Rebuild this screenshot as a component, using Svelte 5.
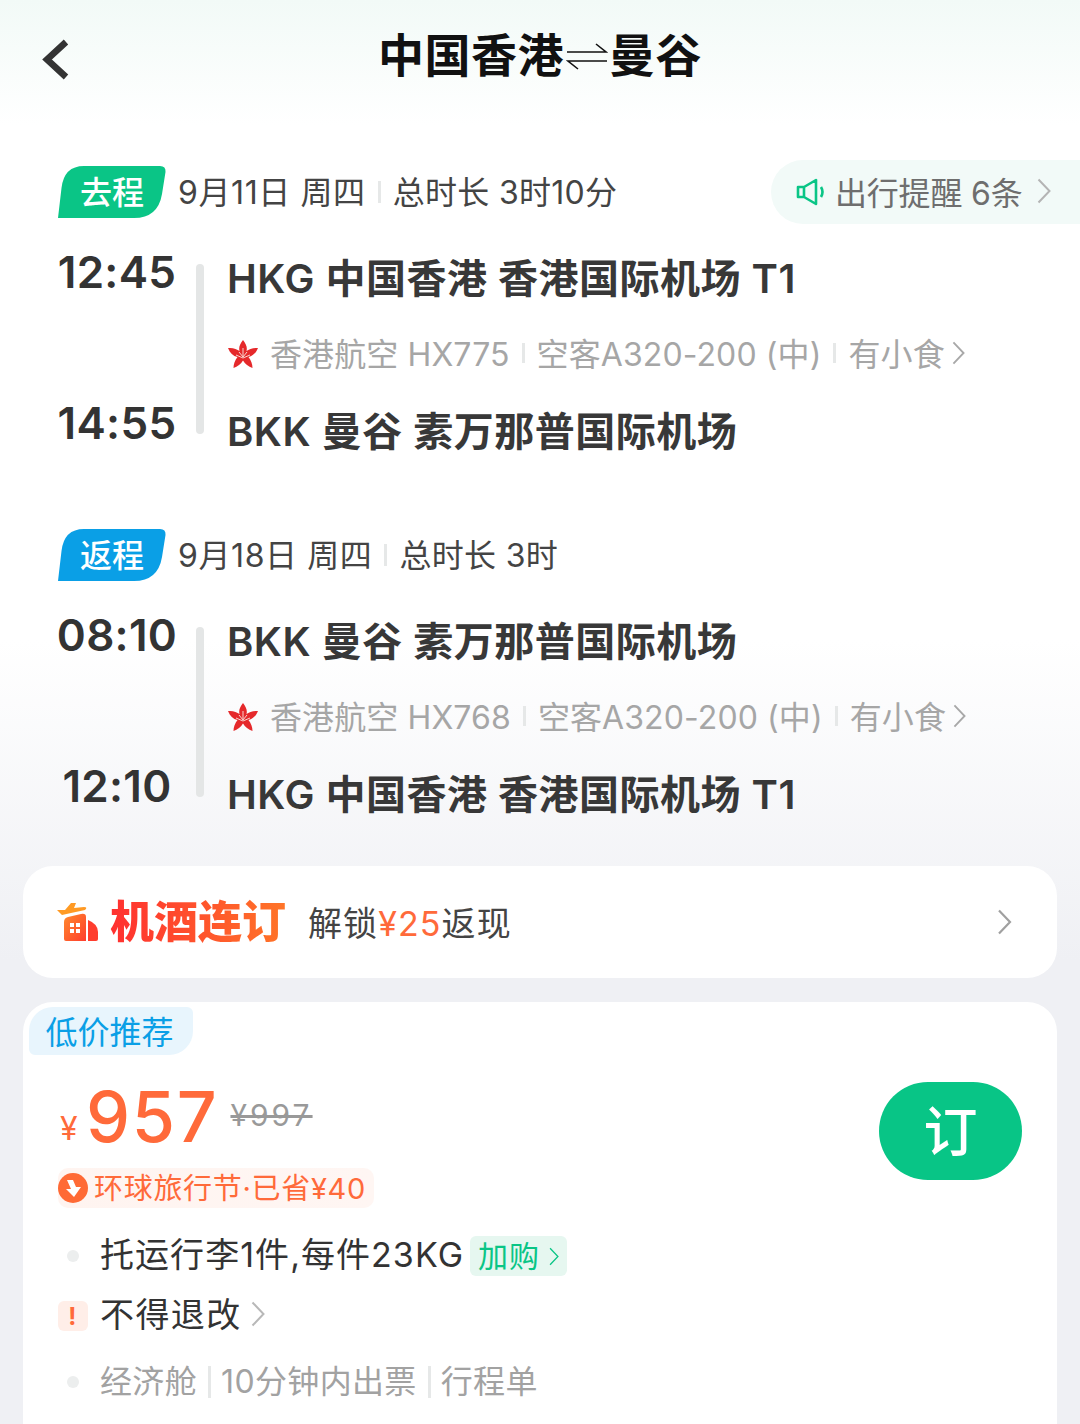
<script>
  const legs = [
    {
      tag: '去程', color: '#0ac586', date: '9月11日 周四', total: '总时长 3时10分', notice: true,
      dep: '12:45', arr: '14:55',
      from: 'HKG 中国香港 香港国际机场 T1', to: 'BKK 曼谷 素万那普国际机场',
      flight: '香港航空 HX775'
    },
    {
      tag: '返程', color: '#0a9fe6', date: '9月18日 周四', total: '总时长 3时', notice: false,
      dep: '08:10', arr: '12:10',
      from: 'BKK 曼谷 素万那普国际机场', to: 'HKG 中国香港 香港国际机场 T1',
      flight: '香港航空 HX768'
    }
  ]
</script>

{#snippet chevron(w, h, color, sw)}
  <svg class="chev" width={w} height={h} viewBox="0 0 14 26" fill="none" stroke={color} stroke-width={sw}>
    <path d="M1.5 1.5 12.5 13 1.5 24.5" />
  </svg>
{/snippet}

{#snippet bauhinia()}
  <svg class="flower" width="30" height="28" viewBox="0 0 30 28">
    <path fill="#e5292b" d="M15 0C18 4 19.500 7 18.500 11 21 9 25 7.500 30 8 28 13 25 16 20.500 17 23 20 24.500 24 24.500 28 20.500 26.500 17 24 15 20.500 13 24 9.500 26.500 5.500 28 5.500 24 7 20 9.500 17 5 16 2 13 0 8 5 7.500 9 9 11.500 11 10.500 7 12 4 15 0Z" />
    <path fill="none" stroke="#f8d3ce" stroke-width="1" d="M15 8v9M11 12l4 5 4-5M8 15l7 3 7-3" />
  </svg>
{/snippet}

<div class="page">
  <header class="nav">
    <svg class="back" width="27" height="41" viewBox="0 0 27 41" fill="none" stroke="#333" stroke-width="6.500">
      <path d="M24 3 5 20.500 24 38" />
    </svg>
    <h1>
      中国香港<svg class="swap" width="42" height="30" viewBox="0 0 42 30" fill="none" stroke="#111" stroke-width="1.600">
        <path d="M1 11H40L30 3M41 20H2L12 28" />
      </svg>曼谷
    </h1>
  </header>

  <section class="legs">
    {#each legs as leg}
      <div class="leg">
        <div class="leg-head">
          <span class="tag">
            <svg width="108" height="52" viewBox="0 0 108 52">
              <path fill={leg.color} d="M0 52 3.500 22Q6 0 26 0H102Q108 0 107.500 6L104 28Q100 52 76 52Z" />
            </svg>
            <b>{leg.tag}</b>
          </span>
          <span class="date">{leg.date}</span>
          <i class="sep"></i>
          <span class="date total">{leg.total}</span>
          {#if leg.notice}
            <div class="notice">
              <svg width="30" height="30" viewBox="0 0 30 30" fill="none" stroke="#0ac586" stroke-width="2.600">
                <path d="M2 10h6v10H2zM8 10 20 3v24L8 20zM25 10q3 5 0 10" stroke-linejoin="round" />
              </svg>
              <span class="notice-text">出行提醒 6条</span>
              {@render chevron(14, 26, '#b4b4b4', 2)}
            </div>
          {/if}
        </div>
        <div class="leg-body">
          <div class="times">
            <span>{leg.dep}</span>
            <span>{leg.arr}</span>
          </div>
          <i class="rail"></i>
          <div class="info">
            <div class="route">{leg.from}</div>
            <div class="meta">
              {@render bauhinia()}
              <span>{leg.flight}</span>
              <i class="sep small"></i>
              <span>空客A320-200 (中)</span>
              <i class="sep small"></i>
              <span>有小食</span>
              {@render chevron(13, 24, '#a8a8a8', 2)}
            </div>
            <div class="route last">{leg.to}</div>
          </div>
        </div>
      </div>
    {/each}
  </section>

  <section class="bundle">
    <svg width="41" height="39" viewBox="0 0 41 39">
      <defs>
        <linearGradient id="bundleFill" x1="0" y1="0" x2="1" y2="1">
          <stop offset="0" stop-color="#ff8a2c" />
          <stop offset="1" stop-color="#ff3d2e" />
        </linearGradient>
      </defs>
      <path fill="#ff9a24" d="M0 7 8 7 14 0H19L17 5 27 4Q31 4 28 7L14 10 5 12Z" />
      <path fill="url(#bundleFill)" fill-rule="evenodd" d="M7 19Q7 15 11 14L24 11Q29 10 29 14V38H9Q7 38 7 36ZM13 20h4v4h-4ZM19 20h4v4h-4ZM13 26h4v4h-4ZM19 26h4v4h-4Z" />
      <path fill="#ff3d2e" d="M31 17Q41 21 41 29V36Q41 38 39 38H31Z" />
    </svg>
    <span class="bundle-name">机酒连订</span>
    <span class="bundle-text">解锁<em>¥25</em>返现</span>
    {@render chevron(15, 26, '#a0a0a0', 2.200)}
  </section>

  <section class="offer">
    <div class="offer-tag"><span>低价推荐</span></div>
    <div class="offer-main">
      <div class="offer-left">
        <div class="price">
          <span class="yen">¥</span>
          <span class="amount">957</span>
          <s>¥997</s>
        </div>
        <div class="promo">
          <svg width="30" height="30" viewBox="0 0 30 30">
            <circle cx="15" cy="15" r="15" fill="#ff6a35" />
            <path fill="#fff" d="M9 7h6l3 7h5l-7 10-8-8h5z" />
          </svg>
          <span>环球旅行节·已省¥40</span>
        </div>
      </div>
      <button class="book"><span>订</span></button>
    </div>
    <ul class="perks">
      <li class="baggage">
        <i class="dot"></i>
        <span class="perk-text">托运行李1件,每件23KG</span>
        <span class="addon"><span>加购</span>{@render chevron(10, 19, '#0ac586', 1.800)}</span>
      </li>
      <li class="refund">
        <i class="warn">!</i>
        <span class="perk-text">不得退改</span>
        {@render chevron(14, 26, '#b8b8b8', 2)}
      </li>
      <li class="extras">
        <i class="dot"></i>
        <span class="perk-text">经济舱</span>
        <i class="sep tall"></i>
        <span class="perk-text">10分钟内出票</span>
        <i class="sep tall"></i>
        <span class="perk-text">行程单</span>
      </li>
    </ul>
  </section>
</div>

<style>
  :global(body) {
    margin: 0;
  }

  .page {
    height: 1424px;
    overflow: hidden;
    box-sizing: border-box;
    font-family: Inter, 'Noto Sans CJK SC', sans-serif;
    color: #333;
    background: linear-gradient(180deg, #f2faf7 0, #fff 125px, #fff 640px, #eff0f4 960px, #eff0f4 100%);
  }

  i {
    font-style: normal;
  }

  svg {
    display: block;
    flex-shrink: 0;
  }

  .nav {
    position: relative;
    height: 110px;
    display: flex;
    align-items: center;
    justify-content: center;
  }

  .back {
    position: absolute;
    left: 42px;
    top: 39px;
  }

  h1 {
    margin: 0;
    display: flex;
    align-items: center;
    font-size: 46px;
    font-weight: 700;
    line-height: 56px;
    letter-spacing: 0.5px;
    color: #111;
  }

  .swap {
    margin: 2px 1px 0 2px;
  }

  .legs {
    margin-top: 50px;
    padding-bottom: 23px;
    display: flex;
    flex-direction: column;
    gap: 43px;
  }

  .leg {
    height: 320px;
  }

  .leg-head {
    height: 64px;
    padding-left: 58px;
    display: flex;
    align-items: center;
  }

  .tag {
    position: relative;
    width: 108px;
    height: 52px;
    margin-right: 12px;
    display: flex;
    align-items: center;
    justify-content: center;
  }

  .tag svg {
    position: absolute;
    inset: 0;
  }

  .tag b {
    position: relative;
    padding-bottom: 5px;
    font-size: 32px;
    font-weight: 500;
    color: #fff;
  }

  .date {
    padding-bottom: 4px;
    font-size: 32px;
    letter-spacing: 0.6px;
    color: #444;
  }

  .date.total {
    letter-spacing: 0.3px;
  }

  .sep {
    width: 3px;
    height: 22px;
    margin: 0 12px;
    background: #e6e8e8;
  }

  .sep.small {
    margin: 0 12px;
    height: 20px;
  }

  .sep.tall {
    height: 32px;
    margin: 0 11px;
  }

  .notice {
    margin-left: auto;
    width: 309px;
    height: 64px;
    box-sizing: border-box;
    padding-left: 25px;
    display: flex;
    align-items: center;
    gap: 9px;
    border-radius: 32px 0 0 32px;
    background: #f2faf8;
    font-size: 32px;
    letter-spacing: -0.2px;
    color: #6e6e6e;
  }

  .notice-text {
    padding-bottom: 3px;
  }

  .notice .chev {
    margin: 0 0 2px 6px;
  }

  .leg-body {
    display: flex;
    padding-left: 58px;
  }

  .times {
    width: 118px;
    padding-top: 20px;
    display: flex;
    flex-direction: column;
    align-items: center;
    gap: 95px;
    font-size: 44px;
    font-weight: 600;
    line-height: 56px;
    letter-spacing: 0.3px;
    color: #333;
  }

  .rail {
    width: 8px;
    height: 170px;
    margin: 40px 23px 0 20px;
    border-radius: 4px;
    background: #e4e6e6;
  }

  .info {
    padding-top: 27px;
  }

  .route {
    font-size: 40px;
    font-weight: 600;
    line-height: 56px;
    letter-spacing: 0.5px;
    color: #383838;
    white-space: nowrap;
  }

  .route.last {
    margin-top: 29px;
  }

  .meta {
    height: 44px;
    margin-top: 24px;
    display: flex;
    align-items: center;
    font-size: 32px;
    letter-spacing: 0.1px;
    color: #a6a6a6;
    white-space: nowrap;
  }

  .meta span {
    padding-bottom: 3px;
  }

  .flower {
    margin: 2px 12px 0 1px;
  }

  .meta .chev {
    margin-left: 7px;
  }

  .bundle {
    height: 112px;
    margin: 0 23px;
    padding: 0 45px 0 34px;
    display: flex;
    align-items: center;
    border-radius: 30px;
    background: #fff;
  }

  .bundle-name {
    margin-left: 12px;
    font-size: 44px;
    font-weight: 900;
    line-height: 56px;
    color: transparent;
    background: linear-gradient(90deg, #ff3030, #ff7528);
    background-clip: text;
    -webkit-background-clip: text;
  }

  .bundle-text {
    margin-left: 22px;
    padding-bottom: 2px;
    font-size: 34px;
    letter-spacing: 1.1px;
    color: #444;
    flex: 1;
  }

  .bundle-text em {
    font-style: normal;
    color: #ff6a3a;
  }

  .offer {
    margin: 24px 23px 0;
    height: 500px;
    padding: 5px 0 0;
    box-sizing: border-box;
    border-radius: 30px 30px 0 0;
    background: #fff;
  }

  .offer-tag {
    width: 164px;
    height: 48px;
    margin-left: 6px;
    display: flex;
    align-items: center;
    justify-content: center;
    border-radius: 24px 6px 24px 6px;
    background: #e8f5fd;
    font-size: 32px;
    color: #0a9fe6;
  }

  .offer-tag span {
    padding: 0 3px 3px 0;
  }

  .offer-main {
    margin-top: 27px;
    padding: 0 35px;
    display: flex;
    justify-content: space-between;
    align-items: flex-start;
  }

  .price {
    height: 68px;
    margin-top: 2px;
    display: flex;
    align-items: baseline;
    color: #ff6a3a;
  }

  .yen {
    position: relative;
    top: -2px;
    width: 30px;
    font-size: 32px;
    padding-left: 2px;
    box-sizing: border-box;
  }

  .amount {
    margin-left: -2px;
    font-size: 70px;
    line-height: 66px;
    font-weight: 500;
    letter-spacing: 1.7px;
  }

  s {
    margin-left: 12px;
    position: relative;
    top: -16px;
    font-size: 30px;
    letter-spacing: 3px;
    color: #999;
  }

  .promo {
    margin-top: 16px;
    width: 316px;
    height: 40px;
    display: flex;
    align-items: center;
    gap: 6px;
    border-radius: 10px;
    background: linear-gradient(90deg, #fff4f0, #fff6f3);
    font-size: 29px;
    letter-spacing: 0.7px;
    color: #ff6a3a;
    white-space: nowrap;
  }

  .promo span {
    padding-bottom: 5px;
  }

  .book {
    width: 143px;
    height: 98px;
    margin-top: 0;
    padding: 0 0 6px;
    border: 0;
    border-radius: 49px;
    background: #08c586;
    color: #fff;
    font: 500 54px Inter, 'Noto Sans CJK SC', sans-serif;
  }

  .perks {
    margin: 0;
    padding: 0 0 0 35px;
    list-style: none;
    font-size: 34px;
    color: #333;
  }

  li {
    display: flex;
    align-items: center;
    white-space: nowrap;
  }

  .perk-text {
    padding-bottom: 7px;
    margin-left: -1px;
  }

  .baggage {
    margin-top: 26px;
    height: 44px;
    letter-spacing: 1.05px;
  }

  .refund {
    margin-top: 16px;
    height: 44px;
    letter-spacing: 1.4px;
  }

  .extras {
    margin-top: 22px;
    height: 44px;
    font-size: 32px;
    letter-spacing: 0.35px;
    color: #a2a2a2;
  }

  .dot {
    width: 12px;
    height: 12px;
    margin: 0 22px 0 9px;
    border-radius: 50%;
    background: #eceeee;
  }

  .warn {
    width: 30px;
    height: 30px;
    margin-right: 13px;
    display: flex;
    align-items: center;
    justify-content: center;
    border-radius: 6px;
    background: #ffeee8;
    font-size: 24px;
    font-weight: 700;
    color: #ff6a3a;
  }

  .refund .chev {
    margin: 0 0 4px 9px;
  }

  .addon {
    height: 40px;
    margin-left: 6px;
    padding: 0 8px;
    display: flex;
    align-items: center;
    gap: 9px;
    border-radius: 6px;
    background: #e6f7f0;
    font-size: 30px;
    letter-spacing: 0.8px;
    color: #0ac586;
  }

  .addon span {
    padding-bottom: 4px;
  }
</style>
